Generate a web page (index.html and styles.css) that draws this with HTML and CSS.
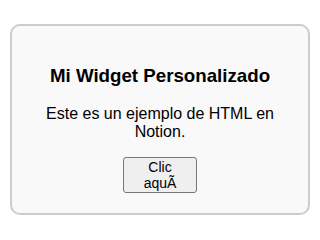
FILE: index.html
```html
<!DOCTYPE html>
<html lang="es">
<head>
<meta charset="utf-8">
<link rel="stylesheet" href="styles.css">
</head>
<body>
<div class="widget">
  <h3 class="title">Mi Widget Personalizado</h3>
  <p class="text">Este es un ejemplo de HTML en Notion.</p>
  <button class="btn">Clic aquÃ&shy;</button>
</div>
</body>
</html>
```
FILE: styles.css
```css
html, body {
  margin: 0;
  background: #ffffff;
}
body {
  padding: 24px 10px;
  font-family: "Liberation Sans", Arial, sans-serif;
  color: #000;
}
.widget {
  border: 2px solid #cccccc;
  border-radius: 10px;
  background: #f9f9f9;
  padding: 20px;
  text-align: center;
}
.title {
  font-size: 18.72px;
  font-weight: bold;
  margin: 18.72px 0;
}
.text {
  font-size: 16px;
  margin: 16px 0;
}
.btn {
  font-family: "Liberation Sans", Arial, sans-serif;
  font-size: 14px;
  line-height: 16px;
  width: 74px;
  padding: 1px 6px;
  background: #efefef;
  border: 1px solid #767676;
  border-radius: 3px;
  color: #000;
  display: inline-block;
  vertical-align: top;
}
```
